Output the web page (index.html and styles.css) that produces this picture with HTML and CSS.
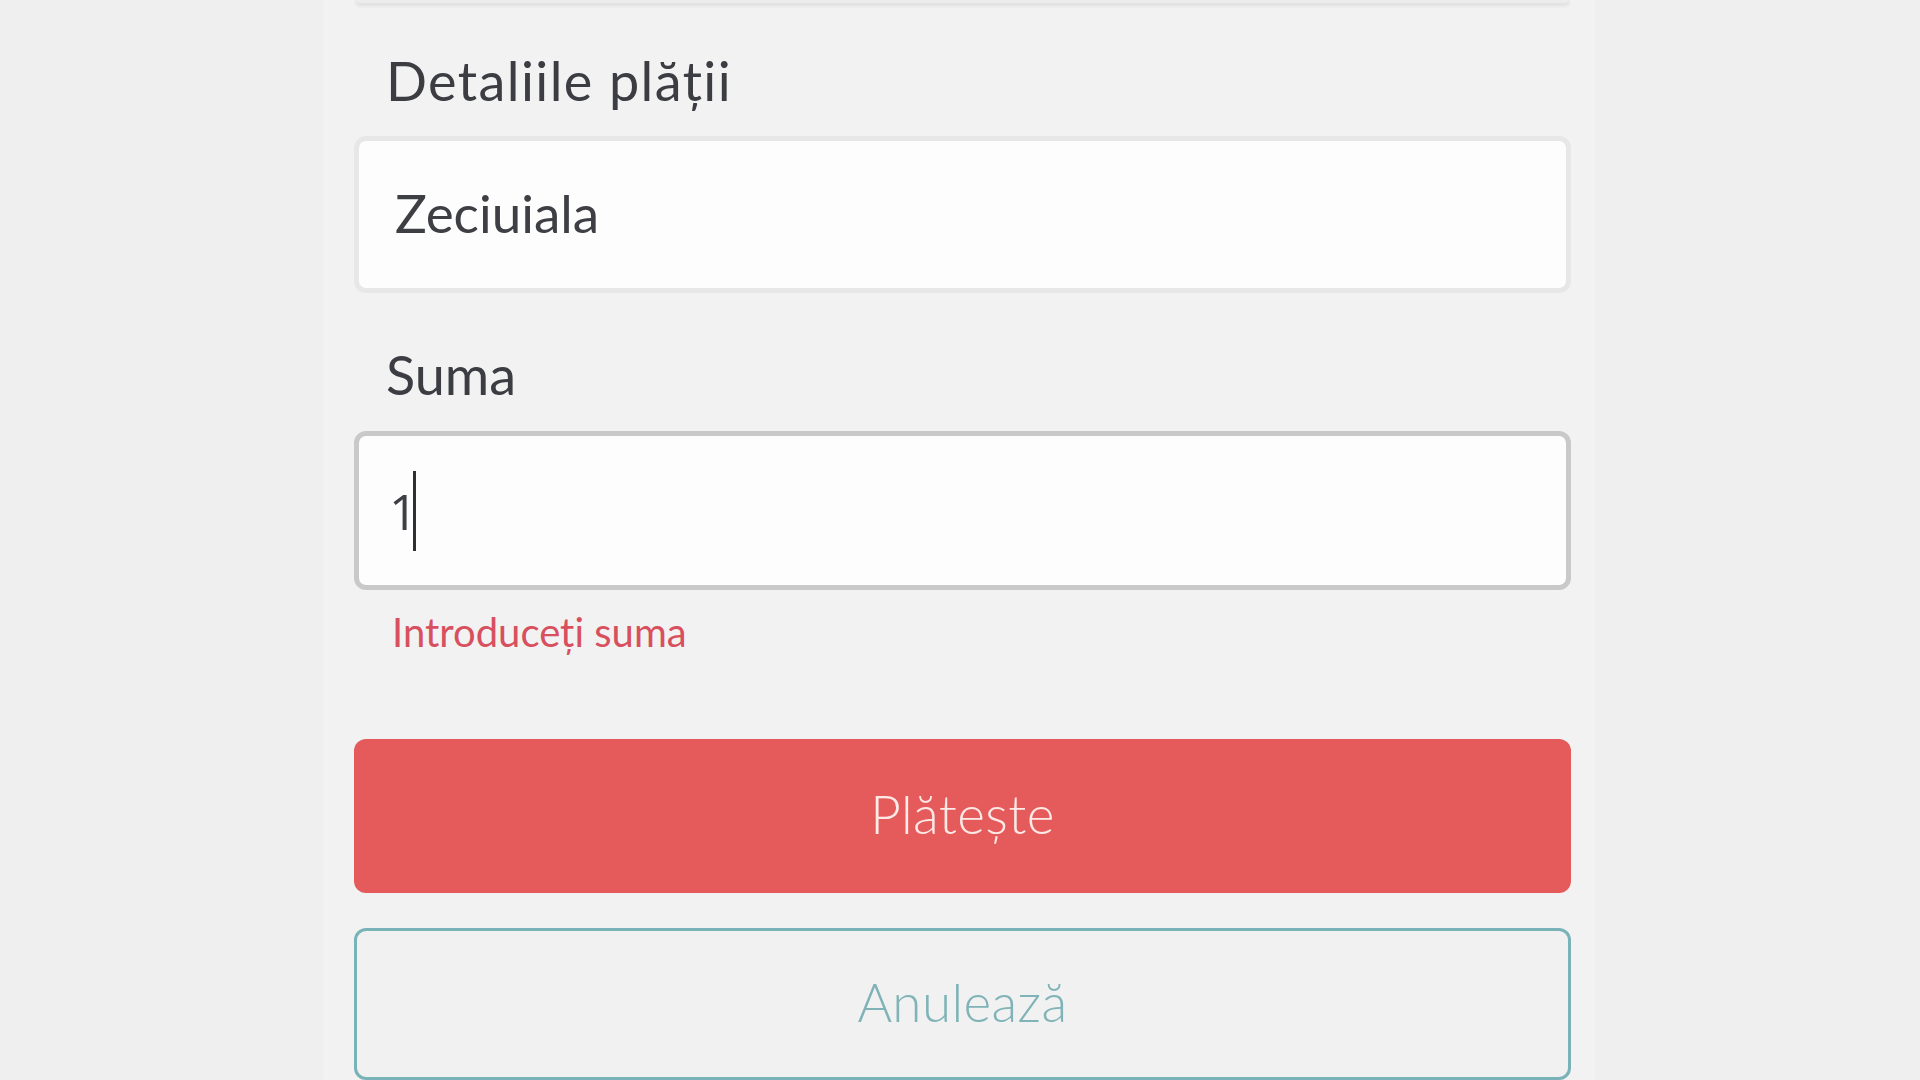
FILE: index.html
```html
<!DOCTYPE html>
<html lang="ro">
<head>
<meta charset="utf-8">
<title>Detaliile plății</title>
<link rel="stylesheet" href="styles.css">
</head>
<body>
<div class="page">
  <main class="column">
    <div class="prev-card"></div>
    <h2 class="label label-first">Detaliile plății</h2>
    <div class="field">Zeciuiala</div>
    <h2 class="label">Suma</h2>
    <div class="field field-focus"><span class="digit">1</span><span class="caret"></span></div>
    <p class="error">Introduceți suma</p>
    <button class="btn btn-pay" type="button">Plătește</button>
    <button class="btn btn-cancel" type="button">Anulează</button>
  </main>
</div>
</body>
</html>
```

FILE: styles.css
```css
* { box-sizing: border-box; }

html, body {
  margin: 0;
  padding: 0;
  height: 1080px;
  overflow: hidden;
  background: #efefef;
  font-family: "Lato", "Noto Sans", sans-serif;
}

.page {
  display: flex;
  height: 1080px;
  padding-left: 323px;
}

.column {
  width: 1272px;
  height: 1080px;
  background: #f2f2f2;
  padding: 0 24px 0 31px;
  display: flex;
  flex-direction: column;
}

.prev-card {
  height: 5px;
  margin: 0 1px;
  background: #ececec;
  border-bottom: 2px solid #e3e3e3;
  border-radius: 0 0 12px 12px;
  box-shadow: 0 2px 3px rgba(0, 0, 0, 0.05);
  flex-shrink: 0;
}

.label {
  margin: 0;
  font-size: 54px;
  font-weight: 400;
  line-height: 65px;
  color: #3c3d42;
  padding-left: 32px;
}

.label-first {
  margin-top: 43px;
  letter-spacing: 1.4px;
}

.field {
  margin-top: 23px;
  height: 157px;
  background: #fdfdfd;
  border: 5px solid #e7e7e7;
  border-radius: 12px;
  display: flex;
  align-items: center;
  padding-left: 36px;
  padding-bottom: 4px;
  font-size: 53px;
  color: #3e3f44;
  flex-shrink: 0;
}

.field + .label { margin-top: 49px; }

.field-focus {
  margin-top: 24px;
  height: 159px;
  border-color: #c9c9c9;
  padding-left: 30px;
  padding-bottom: 0;
}

.digit {
  font-family: "Open Sans", "Lato", sans-serif;
  font-size: 50px;
  color: #3e3f44;
}

.caret {
  display: inline-block;
  width: 3px;
  height: 80px;
  background: #2e2f33;
  margin-left: -5px;
}

.error {
  margin: 18px 0 0 0;
  padding-left: 38px;
  font-size: 40px;
  line-height: 48px;
  color: #d8505e;
}

.btn {
  flex-shrink: 0;
  width: 100%;
  height: 154px;
  border-radius: 12px;
  font-family: inherit;
  font-size: 53px;
  font-weight: 300;
  letter-spacing: 0.4px;
  display: flex;
  align-items: center;
  justify-content: center;
  padding: 0 0 6px 0;
}

.btn-pay {
  margin-top: 83px;
  background: #e55a5a;
  border: none;
  color: #fde9e6;
}

.btn-cancel {
  margin-top: 35px;
  height: 152px;
  background: #f1f1f1;
  border: 3px solid #7ab3b7;
  color: #7fb3b7;
}
```
